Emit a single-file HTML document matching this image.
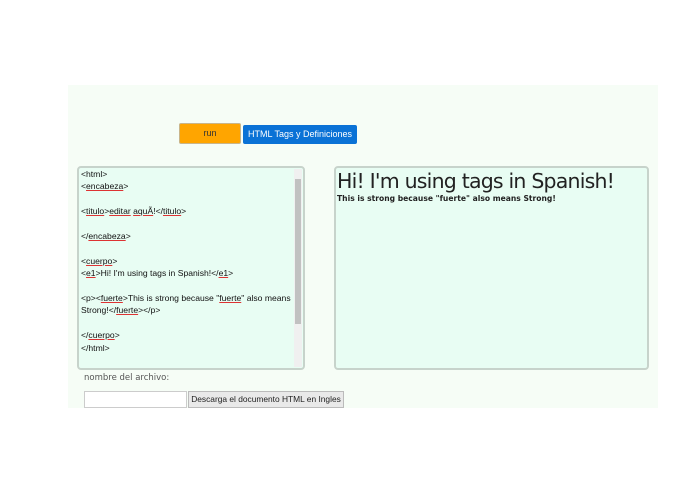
<!DOCTYPE html>
<html><head><style>
body{margin:0;width:695px;height:494px;background:#fff;font-family:"Liberation Sans",Arial,sans-serif;position:relative;overflow:hidden}
.bg{position:absolute;left:68px;top:85px;width:590px;height:323px;background:#f6fdf6}
.btn{position:absolute;font-size:9px;text-align:center;box-sizing:border-box;white-space:nowrap}
.ta{position:absolute;left:77px;top:166px;width:228px;height:204px;box-sizing:border-box;border:2px solid #c7d3cb;border-radius:4px;background:#e8fdf3;font-size:8.6px;line-height:12.4px;color:#111;padding:0 2px;white-space:nowrap;overflow:hidden}
.ta u{text-decoration:underline #d33;text-decoration-thickness:1px}
.sb{position:absolute;right:1px;top:1px;width:8px;height:198px;background:#f0f0f0}
.th{position:absolute;left:1px;top:10px;width:6px;height:145px;background:#c1c1c1}
.pv{position:absolute;left:334px;top:166px;width:315px;height:204px;box-sizing:border-box;border:2px solid #c7d3cb;border-radius:4px;background:#e8fdf3;padding:0 0 0 1px;color:#222}
</style></head><body>
<div class="bg"></div>
<div class="btn" style="left:179px;top:123px;width:62px;height:21px;background:#ffa500;border:1px solid #c9b58a;border-radius:2px;line-height:19px;color:#333">run</div>
<div class="btn" style="left:243px;top:125px;width:114px;height:19px;background:#0a72d6;border-radius:2px;line-height:19px;color:#fff">HTML Tags y Definiciones</div>
<div class="ta">
&lt;html&gt;<br>&lt;<u>encabeza</u>&gt;<br><br>&lt;<u>titulo</u>&gt;<u>editar</u> <u>aquÃ</u>!&lt;/<u>titulo</u>&gt;<br><br>&lt;/<u>encabeza</u>&gt;<br><br>&lt;<u>cuerpo</u>&gt;<br>&lt;<u>e1</u>&gt;Hi! I'm using tags in Spanish!&lt;/<u>e1</u>&gt;<br><br>&lt;p&gt;&lt;<u>fuerte</u>&gt;This is strong because "<u>fuerte</u>" also means<br>Strong!&lt;/<u>fuerte</u>&gt;&lt;/p&gt;<br><br>&lt;/<u>cuerpo</u>&gt;<br>&lt;/html&gt;
<div class="sb"><div class="th"></div></div>
</div>
<div class="pv">
<div style="font-family:'DejaVu Sans',sans-serif;font-size:20.5px;line-height:26px;margin-top:0;letter-spacing:-0.8px">Hi! I'm using tags in Spanish!</div>
<div style="font-family:'DejaVu Sans',sans-serif;font-size:7.6px;font-weight:bold;margin-top:0">This is strong because "fuerte" also means Strong!</div>
</div>
<div style="position:absolute;left:84px;top:373px;font-size:8.5px;color:#555;font-family:'DejaVu Sans',sans-serif">nombre del archivo:</div>
<div style="position:absolute;left:84px;top:391px;width:103px;height:17px;box-sizing:border-box;border:1px solid #ccc;background:#fff"></div>
<div class="btn" style="left:188px;top:391px;width:156px;height:17px;background:#e9e9e9;border:1px solid #bbb;line-height:15px;color:#222;font-size:8.4px">Descarga el documento HTML en Ingles</div>
</body></html>
